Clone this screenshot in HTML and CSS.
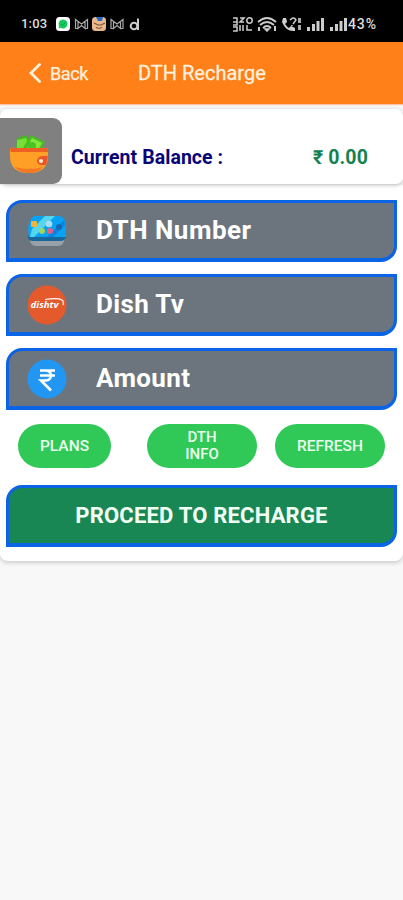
FILE: index.html
```
<!DOCTYPE html>
<html lang="en">
<head>
<meta charset="utf-8">
<title>DTH Recharge</title>
<link rel="stylesheet" href="styles.css">
</head>
<body>
<div class="status">
  <span class="clock">1:03</span>
  <svg class="notices" width="86" height="16" viewBox="0 0 86 16">
    <rect x="0" y="1" width="14" height="14" rx="3.5" fill="#fff"/>
    <path d="M7 3.5a4.5 4.5 0 1 1-2.4 8.3l-2 .6.6-2A4.500 4.500 0 0 1 7 3.500z" fill="#12c95c"/>
    <path d="M5 8l1.500 1.500L9.500 6.500" stroke="#0a9a43" fill="none"/>
    <g fill="none" stroke="#aaa" stroke-width="1.200"><path id="mail" d="M22 12.500h-2.500v-9l6 4.500 6-4.500v9H29M22 6v6.500l3.500-3 3.500 3V6"/><use href="#mail" x="35.500"/></g>
    <rect x="36" y="1" width="14" height="14" rx="3.500" fill="#e9b98b"/>
    <path d="M40 1h7l-1 4h-4z" fill="#2469c8"/>
    <path d="M38 7l4 2h3l4-2M40 11.500q3 1.500 6 0" stroke="#79523d" stroke-width="1.200" fill="none"/>
    <g fill="none" stroke="#ccc" stroke-width="2"><circle cx="78" cy="10" r="3.300"/><path d="M82 2.500v11.500"/></g>
  </svg>
  <svg class="signals" width="116" height="16" viewBox="0 0 116 16">
    <g fill="none" stroke="#ccc" stroke-width="1.500">
      <path d="M1 2h4v4H1M5 6v3H1M8 2h4l-4 4h4M1 11h4v4H1M8 9v6M11 9v6M15 9v5h5"/>
      <circle cx="17.500" cy="4.500" r="2.700"/>
      <path d="M26 6q9-8 18 0M28 9q7-6 14 0M31 12q4-4 8 0" stroke-width="1.800"/>
      <path d="M27 11v4M43 10v5" stroke-width="2"/><path d="M33 13h4l-2 2z" fill="#ccc"/>
      <path d="M58 4q4-4 6 0l-3 4M60 9v1"/>
    </g>
    <path d="M51 2l3 0 1 4-2 2q2 3 4 4l2-2 4 2v3q-9 1-13-9z" fill="#d0d0d0"/>
    <path d="M66 2h3v5h-3zM66 9h3v5h-3z" fill="#aaa"/>
    <g fill="#ccc"><path id="bars" d="M75 11h3v4h-3zM80 8h3v7h-3zM84.500 5h3v10h-3zM89 2h3v13h-3z"/><use href="#bars" x="23"/></g>
  </svg>
  <span class="battery">43%</span>
</div>
<header class="header">
  <a class="back"><svg width="12" height="20" viewBox="0 0 12 20"><path d="M10.500 1.500L2 10l8.500 8.500" fill="none" stroke="#fff0df" stroke-width="2.800" stroke-linecap="round"/></svg><span>Back</span></a>
  <h1>DTH Recharge</h1>
</header>
<section class="balance">
  <div class="wallet">
    <svg width="40" height="42" viewBox="0 0 40 42">
      <path d="M8 5l10-3 5 14-16 2z" fill="#42b91d"/><path d="M8 7l9-2 4 10-13 3z" fill="#78dd36"/>
      <path d="M22 2l14 7-5 9-17-3z" fill="#48bd1f"/><path d="M23 5l10 5-4 7-11-2z" fill="#83e63e"/><circle cx="23" cy="13" r="4" fill="#4bc421"/>
      <path d="M1 16q1-2 4-1h30q4-1 4 2v6q0 17-19 17T1 23z" fill="#ff9f25"/>
      <path d="M1 16q1-2 4-1h30q4-1 4 2v2H2z" fill="#ef6023"/><path d="M6 34q5 6 14 6t14-6q-14 4-28 0z" fill="#f47726"/>
      <path d="M39 23h-6q-5 1-5 5t5 4h4z" fill="#ee5427"/><circle cx="32" cy="28" r="2" fill="#fff1cf"/>
    </svg>
  </div>
  <span class="balance-label">Current Balance :</span><span class="balance-value">₹ 0.00</span>
</section>
<main class="form">
  <div class="field">
    <svg class="icon" viewBox="0 0 40 40">
      <path d="M2 26h36q-1 9-7 9H9q-6 0-7-9z" fill="#98a1a9"/><path d="M1 24h38v2q-1 4-6 4H6q-5 0-5-4z" fill="#17679d"/>
      <path d="M7 5h26q6 2 6 11v10H2Q-1 10 7 5z" fill="#08a2f4"/>
      <path d="M5 18L18 5h10L7 26H3z" fill="#55d6ee"/><path d="M20 26L37 9l1 5-12 12z" fill="#0a81e3"/>
      <rect x="4" y="10" width="6" height="6" rx="1" fill="#efb33c"/><circle cx="15" cy="20" r="3" fill="#a1d55d"/><circle cx="22" cy="13" r="3.300" fill="#a7def4"/><circle cx="23" cy="20" r="3" fill="#e6607e"/><circle cx="32" cy="16" r="3" fill="#1269b1"/>
    </svg>
    <span class="number">DTH Number</span>
  </div>
  <div class="field">
    <svg class="icon" viewBox="0 0 40 40"><circle cx="20" cy="20" r="19.500" fill="#e45a2c"/><text class="dish" x="3.500" y="23" textLength="28" lengthAdjust="spacingAndGlyphs">dishtv</text><path d="M18 14.500q13-2 17 .5 2 1 1 5" fill="none" stroke="#fff" stroke-width="1.200"/></svg>
    <span class="operator">Dish Tv</span>
  </div>
  <div class="field">
    <svg class="icon" viewBox="0 0 40 40"><circle cx="20" cy="20" r="19.500" fill="#2196f3"/><path d="M13 11.500h15M13 16.500h15M14 11.500h4c8 0 8 10 0 10h-4l10 10" fill="none" stroke="#fff" stroke-width="2.600"/></svg>
    <span class="amount">Amount</span>
  </div>
  <div class="actions">
    <button class="plans">PLANS</button><button class="info"><span>DTH</span><span>INFO</span></button><button class="refresh">REFRESH</button>
  </div>
  <button class="proceed">PROCEED TO RECHARGE</button>
</main>
</body>
</html>
```
FILE: styles.css
```
* { box-sizing: border-box; }
body { margin: 0; min-height: 900px; background: #f8f8f8; font-family: Roboto, sans-serif; }
button { border: 0; padding: 0; font-family: inherit; }
svg { display: block; flex: none; }
.status { height: 42px; padding: 5px 0 0 21px; background: #000; color: #ddd; display: flex; align-items: center; font-size: 14px; font-weight: 500; }
.clock { width: 35px; font-size: 13px; letter-spacing: .2px; }
.signals { margin-left: 90px; }
.battery { margin-left: 0; letter-spacing: .9px; }
.header { height: 62px; background: #ff8018; color: #fff0df; display: flex; align-items: center; padding-left: 29px; box-shadow: 0 1px 1px #f9c5a8; }
.back { display: flex; align-items: center; gap: 9px; width: 109px; font-size: 18px; }
.back span { letter-spacing: -.4px; -webkit-text-stroke: .25px #fff0df; }
h1 { margin: 0; font-size: 20px; font-weight: 400; -webkit-text-stroke: .3px #fff0df; }
.balance { position: relative; height: 75px; margin: 5px 0 1px; background: #fff; border-radius: 7px; box-shadow: 0 1px 4px #bbb; display: flex; align-items: center; padding-top: 9px; font-size: 19.500px; font-weight: 700; }
.wallet { width: 62px; height: 66px; background: #808080; border-radius: 0 9px 9px 0; padding: 15px 0 0 9px; }
.balance-label { width: 242px; margin: 12px 0 0 9px; color: #080477; letter-spacing: .06px; }
.balance-value { margin-top: 12px; color: #148250; letter-spacing: .1px; }
.form { height: 376px; padding: 15px 6px 14px; background: #fff; border-radius: 0 0 8px 8px; box-shadow: 0 2px 4px #ccc; display: flex; flex-direction: column; }
.field { height: 62px; margin-bottom: 12px; border: 3px solid #0b64e5; border-bottom-width: 4px; border-radius: 16px 0; background: #6c757d; color: #fff; display: flex; align-items: center; padding-left: 18px; font-size: 26px; font-weight: 700; }
.field span { margin-top: -1px; }
.number { letter-spacing: .5px; }
.operator, .amount { letter-spacing: .35px; }
.icon { width: 40px; height: 40px; margin-right: 29px; }
.dish { font: italic 700 9px "Open Sans", sans-serif; fill: #fff; }
.actions { display: flex; height: 44px; margin: 2px 12px 17px; }
.actions button { height: 44px; border-radius: 22px; background: #30c957; color: #ecffef; font-size: 15.500px; line-height: 17px; font-weight: 500; }
.plans { width: 93px; }
.info { width: 110px; margin: 0 18px 0 36px; display: flex; flex-direction: column; align-items: center; justify-content: center; }
.actions .info { font-size: 15px; line-height: 17.500px; }
.refresh { width: 110px; }
.proceed { height: 62px; border: 3px solid #0b64e5; border-bottom-width: 4px; border-radius: 16px 0; background: #198754; color: #f1fff5; font-size: 22px; font-weight: 700; letter-spacing: .2px; }
```
